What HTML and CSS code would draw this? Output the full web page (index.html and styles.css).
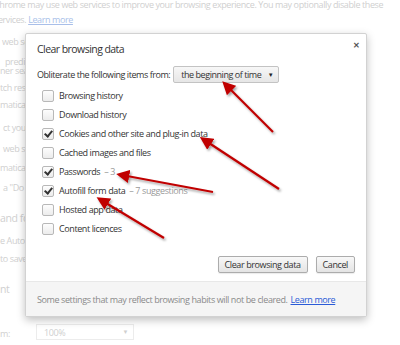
FILE: index.html
```html
<!DOCTYPE html>
<html lang="en">

<head>
    <meta charset="UTF-8">
    <meta name="viewport" content="width=device-width, initial-scale=1.0">
    <title>Clear browsing data</title>
    <link rel="stylesheet" href="styles.css">
</head>

<body>
    <div class="page">
        <p class="intro">Chrome may use web services to improve your browsing experience. You may optionally disable these<br>services. <a href="#">Learn more</a></p>
        <div class="bg-line l1">web service to help resolve navigation errors</div>
        <div class="bg-line l2">predictions to help complete searches</div>
        <div class="bg-line l3">ner search box</div>
        <div class="bg-line l4">tch resources to load pages more quickly</div>
        <div class="bg-line l5">matically send some system information</div>
        <div class="bg-line l6">ct you and your device from dangerous sites</div>
        <div class="bg-line l7">web service to help resolve spelling errors</div>
        <div class="bg-line l8">matically send usage statistics</div>
        <div class="bg-line l9">a "Do Not Track" request</div>
        <div class="bg-line l10">and forms</div>
        <div class="bg-line l11">e Autofill to fill out web forms</div>
        <div class="bg-line l12">to save your web passwords</div>
        <div class="bg-line l13">nt</div>
        <div class="bg-line l14">m:</div>
        <div class="bg-select"><span>100%</span><span class="bg-caret">&#9660;</span></div>
    </div>

    <div class="dialog">
        <div class="dialog-body">
            <div class="dialog-head">
                <h2>Clear browsing data</h2>
                <span class="close">&#10005;</span>
            </div>
            <div class="period-row">
                <span>Obliterate the following items from:</span>
                <div class="select"><span>the beginning of time</span><span class="caret">&#9660;</span></div>
            </div>
            <ul class="items">
                <li><span class="checkbox"></span>Browsing history</li>
                <li><span class="checkbox"></span>Download history</li>
                <li><span class="checkbox checked"></span>Cookies and other site and plug-in data</li>
                <li><span class="checkbox"></span>Cached images and files</li>
                <li><span class="checkbox checked"></span>Passwords <span class="count">&ndash; 3</span></li>
                <li><span class="checkbox checked"></span>Autofill form data <span class="count">&ndash; 7 suggestions</span></li>
                <li><span class="checkbox"></span>Hosted app data</li>
                <li><span class="checkbox"></span>Content licences</li>
            </ul>
            <div class="actions">
                <button class="btn">Clear browsing data</button>
                <button class="btn">Cancel</button>
            </div>
        </div>
        <div class="dialog-foot">Some settings that may reflect browsing habits will not be cleared. <a href="#">Learn more</a></div>
    </div>

    <svg class="arrows" width="400" height="345" viewBox="0 0 400 345">
        <defs>
            <marker id="head" markerWidth="6" markerHeight="6" refX="1" refY="3" orient="auto" markerUnits="strokeWidth">
                <path d="M0,0 L6,3 L0,6 Z" fill="#c00000"></path>
            </marker>
            <filter id="shadow" x="-20%" y="-20%" width="140%" height="140%">
                <feDropShadow dx="1.5" dy="2" stdDeviation="1.2" flood-color="#000" flood-opacity="0.35"></feDropShadow>
            </filter>
        </defs>
        <g stroke="#c00000" stroke-width="2.2" fill="none" marker-end="url(#head)" filter="url(#shadow)">
            <line x1="273" y1="132" x2="230" y2="89"></line>
            <line x1="279" y1="189" x2="209" y2="143"></line>
            <line x1="213" y1="192" x2="127" y2="176"></line>
            <line x1="164" y1="238" x2="106" y2="203"></line>
        </g>
    </svg>
</body>

</html>
```

FILE: styles.css
```css
body {
    margin: 0;
    width: 400px;
    height: 345px;
    overflow: hidden;
    position: relative;
    background: #fff;
    font-family: "Open Sans", "Noto Sans", sans-serif;
    font-size: 9px;
    letter-spacing: -0.4px;
    color: #333;
}

.page {
    color: #cfcfcf;
}

.intro {
    margin: -3px 0 0 -6px;
    line-height: 15px;
    white-space: nowrap;
}

.intro a {
    color: #a9bfe9;
}

.bg-line {
    line-height: 14px;
    white-space: nowrap;
}

.l1 { margin: 8px 0 0 2px; }
.l2 { margin: 9px 0 0 5px; line-height: 8px; }
.l3 { margin: 0; line-height: 10px; }
.l4 { margin: 5px 0 0 0; }
.l5 { margin: 3px 0 0 0; }
.l6 { margin: 9px 0 0 3px; }
.l7 { margin: 7px 0 0 3px; }
.l8 { margin: 5px 0 0 0; }
.l9 { margin: 6px 0 0 3px; }
.l10 { margin: 16px 0 0 0; font-size: 10.5px; }
.l11 { margin: 9px 0 0 0; }
.l12 { margin: 4px 0 0 0; }
.l13 { margin: 16px 0 0 0; font-size: 10.5px; }
.l14 { margin: 31px 0 0 0; }

.bg-select {
    position: absolute;
    left: 36px;
    top: 324px;
    width: 98px;
    height: 16px;
    box-sizing: border-box;
    border: 1px solid #ececec;
    padding: 0 5px 0 7px;
    display: flex;
    justify-content: space-between;
    align-items: center;
}

.bg-caret {
    font-size: 6px;
}

.dialog {
    position: absolute;
    left: 25px;
    top: 33px;
    width: 342px;
    height: 284px;
    box-sizing: border-box;
    background: #fff;
    border: 1px solid #d2d2d2;
    border-radius: 2px;
    box-shadow: 0 3px 8px rgba(0, 0, 0, 0.25);
    display: flex;
    flex-direction: column;
}

.dialog-body {
    flex: 1;
    padding: 0 11px;
}

.dialog-head {
    display: flex;
    justify-content: space-between;
    align-items: center;
    height: 28px;
}

.dialog-head h2 {
    margin: 2px 0 0 0;
    font-size: 10.5px;
    letter-spacing: -0.55px;
    font-weight: normal;
    color: #333;
}

.close {
    font-size: 8px;
    font-weight: bold;
    color: #555;
    margin: -8px -5px 0 0;
}

.period-row {
    display: flex;
    align-items: center;
    gap: 3px;
    margin-top: 4px;
    letter-spacing: -0.45px;
}

.select {
    height: 17px;
    width: 106px;
    box-sizing: border-box;
    border: 1px solid #c3c3c3;
    border-radius: 2px;
    background: linear-gradient(#f7f7f7, #e6e6e6);
    padding: 0 5px 0 7px;
    display: flex;
    justify-content: space-between;
    align-items: center;
    color: #333;
}

.caret {
    font-size: 6px;
    color: #222;
}

.items {
    list-style: none;
    margin: 3px 0 0 0;
    padding: 0 0 0 5px;
}

.items li {
    display: flex;
    align-items: center;
    height: 19px;
    white-space: nowrap;
}

.checkbox {
    width: 10px;
    height: 10px;
    border: 1px solid #b8b8b8;
    border-radius: 2px;
    background: linear-gradient(#fdfdfd, #ececec);
    margin-right: 5px;
    position: relative;
}

.checkbox.checked::after {
    content: "";
    position: absolute;
    left: 3px;
    top: 0px;
    width: 3px;
    height: 6px;
    border: solid #333;
    border-width: 0 2px 2px 0;
    transform: rotate(40deg);
}

.count {
    color: #999;
    margin-left: 4px;
}

.actions {
    display: flex;
    justify-content: flex-end;
    gap: 8px;
    margin-top: 18px;
}

.btn {
    height: 17px;
    padding: 0 6px;
    border: 1px solid #acacac;
    border-radius: 2px;
    background: linear-gradient(#f8f8f8, #e4e4e4);
    font-family: inherit;
    font-size: 9px;
    letter-spacing: -0.4px;
    color: #333;
    box-shadow: 0 1px 1px rgba(0, 0, 0, 0.08);
}

.dialog-foot {
    height: 35px;
    box-sizing: border-box;
    background: #f5f5f5;
    border-top: 1px solid #e8e8e8;
    padding: 0 11px;
    display: flex;
    align-items: center;
    color: #8a8a8a;
    white-space: nowrap;
}

.dialog-foot a {
    color: #2a5bd7;
    margin-left: 3px;
}

.arrows {
    position: absolute;
    left: 0;
    top: 0;
}
```
